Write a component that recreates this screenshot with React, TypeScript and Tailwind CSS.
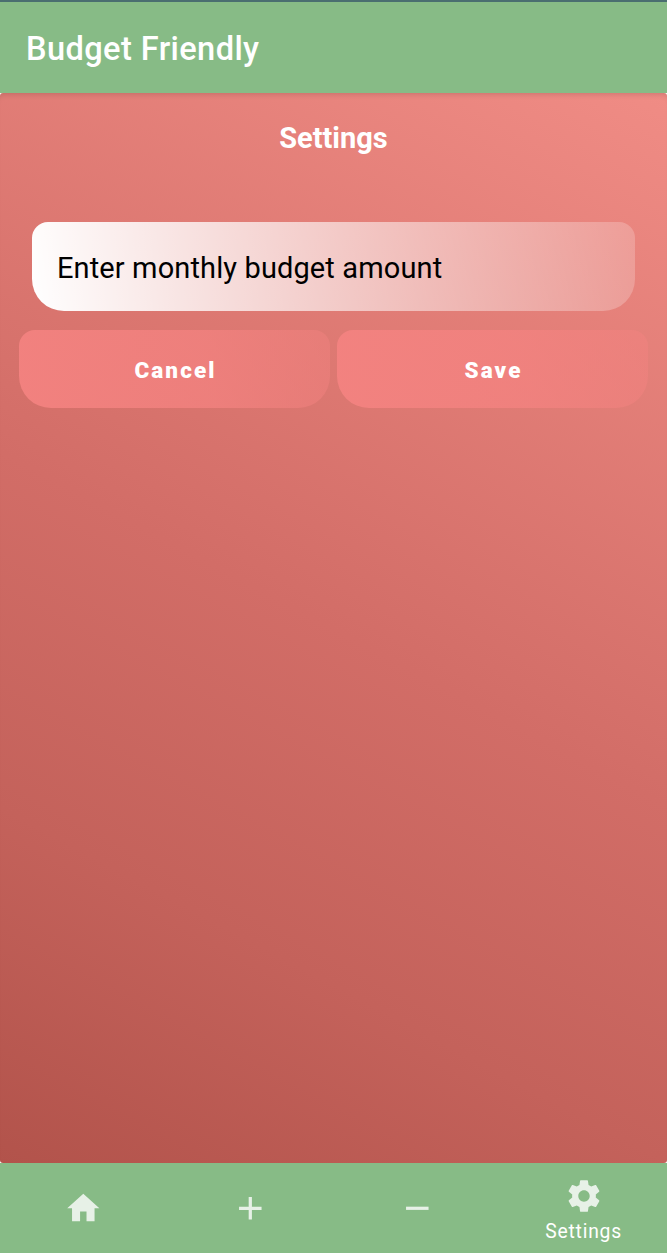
const ICONS = {
  home: "M10 20v-6h4v6h5v-8h3L12 3 2 12h3v8z",
  add: "M19 13h-6v6h-2v-6H5v-2h6V5h2v6h6v2z",
  remove: "M19 13H5v-2h14v2z",
  settings:
    "M19.43 12.98c.04-.32.07-.64.07-.98s-.03-.66-.07-.98l2.11-1.65c.19-.15.24-.42.12-.64l-2-3.46c-.12-.22-.39-.3-.61-.22l-2.49 1c-.52-.4-1.08-.73-1.69-.98l-.38-2.65C14.46 2.18 14.25 2 14 2h-4c-.25 0-.46.18-.49.42l-.38 2.65c-.61.25-1.17.59-1.69.98l-2.49-1c-.23-.09-.49 0-.61.22l-2 3.46c-.13.22-.07.49.12.64l2.11 1.65c-.04.32-.07.65-.07.98s.03.66.07.98l-2.11 1.65c-.19.15-.24.42-.12.64l2 3.46c.12.22.39.3.61.22l2.49-1c.52.4 1.08.73 1.69.98l.38 2.65c.03.24.24.42.49.42h4c.25 0 .46-.18.49-.42l.38-2.65c.61-.25 1.17-.59 1.69-.98l2.49 1c.23.09.49 0 .61-.22l2-3.46c.12-.22.07-.49-.12-.64l-2.11-1.65zM12 15.6c-1.99 0-3.6-1.61-3.6-3.6s1.61-3.6 3.6-3.6 3.6 1.61 3.6 3.6-1.61 3.6-3.6 3.6z",
};

function NavItem({ icon, name, active = false }: { icon: keyof typeof ICONS; name: string; active?: boolean }) {
  return (
    <button aria-label={name} className={`flex flex-1 flex-col items-center ${active ? "pt-[13.5px]" : "pt-[26px]"}`}>
      <svg viewBox="0 0 24 24" className={`shrink-0 fill-[#e7f1e7] ${active ? "size-[38px]" : "size-[38.6px]"}`}>
        <path d={ICONS[icon]} />
      </svg>
      {active && <span className="mt-[5px] text-[19.3px] leading-[24px] tracking-[0.77px] text-white">{name}</span>}
    </button>
  );
}

function ActionButton({ label }: { label: string }) {
  return (
    <button className="h-[78px] flex-1 rounded-t-[16px] rounded-b-[32px] bg-[linear-gradient(76deg,#f58381e6_0%,#f58381b8_60%,#f5838166_100%)] pt-[3px] pl-[2px] text-[22.5px] font-black tracking-[2.1px] text-white">
      {label}
    </button>
  );
}

export default function App() {
  return (
    <div className="flex h-[1253px] w-[667px] flex-col overflow-hidden bg-[#87bb86] font-['Roboto',sans-serif]">
      <header className="flex h-[93px] shrink-0 items-center border-t-2 border-[#4a6e70] pt-[4px] pl-[26px]">
        <h1 className="text-[32.6px] leading-none font-medium tracking-[0.4px] text-white">Budget Friendly</h1>
      </header>
      <div className="flex h-[1070px] shrink-0 bg-white">
        <main className="flex flex-1 flex-col rounded-[3px] bg-[linear-gradient(28deg,#b2534b_0%,#c4625b_25%,#d26d67_50%,#f08c85_100%)] shadow-[inset_0_6px_6px_-5px_rgba(0,0,0,0.16)]">
          <h2 className="mt-[28px] text-center text-[29px] leading-[35px] font-bold text-white">Settings</h2>
          <div className="mx-[32px] mt-[66px] flex h-[89px] items-center rounded-t-[16px] rounded-b-[32px] bg-[linear-gradient(81.6deg,#ffffff_0%,#ffffff33_100%)] pt-[3px] pl-[25px]">
            <span className="text-[29px] leading-none tracking-[0.12px] text-black">Enter monthly budget amount</span>
          </div>
          <div className="mx-[19px] mt-[19px] flex gap-[7px]">
            <ActionButton label="Cancel" />
            <ActionButton label="Save" />
          </div>
        </main>
      </div>
      <nav className="flex flex-1 items-start">
        <NavItem icon="home" name="Home" />
        <NavItem icon="add" name="Add" />
        <NavItem icon="remove" name="Remove" />
        <NavItem icon="settings" name="Settings" active />
      </nav>
    </div>
  );
}
